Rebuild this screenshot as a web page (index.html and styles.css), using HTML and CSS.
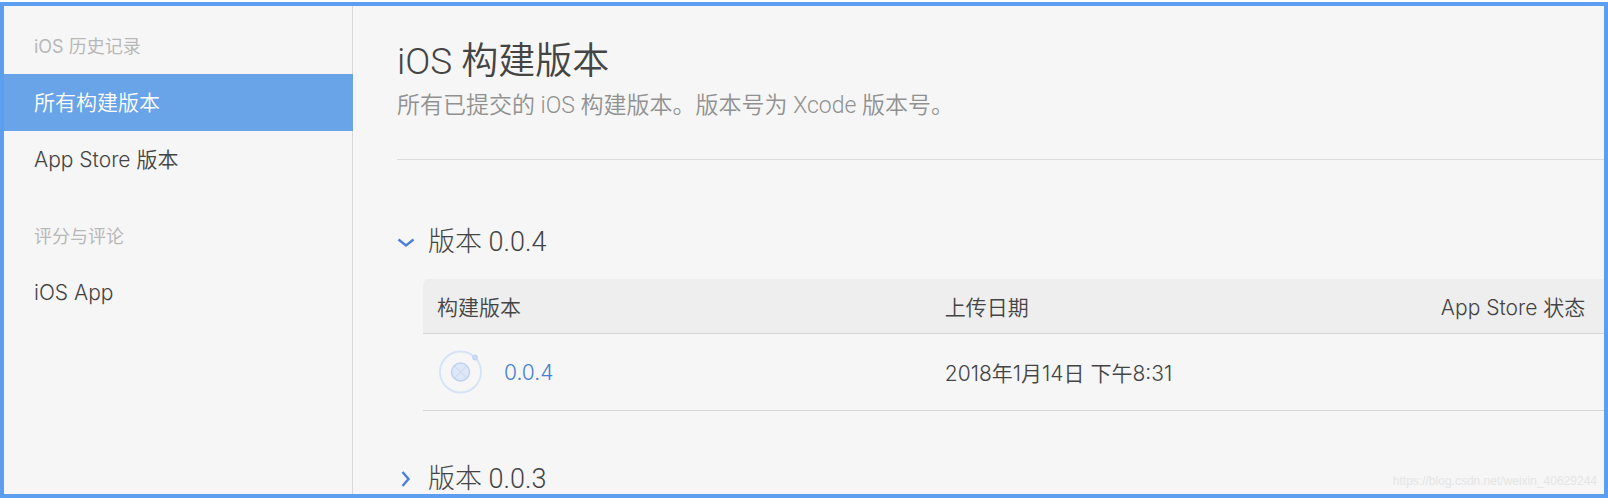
FILE: index.html
```
<!DOCTYPE html>
<html lang="zh-CN">
<head>
  <meta charset="UTF-8">
  <meta name="viewport" content="width=device-width, initial-scale=1.0">
  <title>iOS 构建版本</title>
  <link rel="stylesheet" href="styles.css">
</head>
<body>
  <div class="page">
    <nav class="sidebar">
      <h2 class="nav-title">iOS 历史记录</h2>
      <a class="nav-link active" href="#builds">所有构建版本</a>
      <a class="nav-link" href="#versions">App Store 版本</a>
      <h2 class="nav-title">评分与评论</h2>
      <a class="nav-link" href="#ios-app">iOS App</a>
    </nav>

    <main class="content">
      <header class="content-header">
        <h1>iOS 构建版本</h1>
        <p>所有已提交的 iOS 构建版本。版本号为 Xcode 版本号。</p>
      </header>

      <section class="version">
        <button class="version-toggle" type="button" aria-expanded="true">
          <svg class="chevron" viewBox="0 0 18 18" aria-hidden="true"><path d="M1.5 6.5l7.5 6 7.5-6"/></svg>
          <span>版本 0.0.4</span>
        </button>
        <table class="builds">
          <thead>
            <tr>
              <th class="col-build">构建版本</th>
              <th class="col-date">上传日期</th>
              <th class="col-status">App Store 状态</th>
            </tr>
          </thead>
          <tbody>
            <tr>
              <td>
                <div class="build">
                  <svg class="build-icon" viewBox="0 0 46 46" aria-hidden="true">
                    <circle class="orbit" cx="23.5" cy="23" r="20.5"/>
                    <circle class="planet" cx="23.5" cy="23" r="9"/>
                    <path class="cross" d="M17.5 17l12 12M29.5 17l-12 12"/>
                    <circle class="moon" cx="38" cy="8.5" r="2.5"/>
                  </svg>
                  <a href="#build-004">0.0.4</a>
                </div>
              </td>
              <td>2018年1月14日 下午8:31</td>
              <td></td>
            </tr>
          </tbody>
        </table>
      </section>

      <section class="version">
        <button class="version-toggle" type="button" aria-expanded="false">
          <svg class="chevron" viewBox="0 0 18 18" aria-hidden="true"><path d="M5.500 2l6 7-6 7"/></svg>
          <span>版本 0.0.3</span>
        </button>
      </section>
    </main>

    <span class="watermark">https://blog.csdn.net/weixin_40629244</span>
  </div>
</body>
</html>
```

FILE: styles.css
```
* {
  box-sizing: border-box;
}

body {
  margin: 0;
  padding: 2px 0;
  background-color: #fff;
  color: #444;
  font-family: Inter, "Noto Sans CJK SC", sans-serif;
  font-size: 21px;
  font-weight: 350;
}

h1,
h2,
p {
  margin: 0;
  font-weight: 350;
}

a {
  color: #4a80d0;
  text-decoration: none;
}

.page {
  position: relative;
  display: flex;
  height: calc(100vh - 4px);
  overflow: hidden;
  border: 4px solid #5c9ff0;
  background-color: #f6f6f6;
}

/* Sidebar */
.sidebar {
  flex: 0 0 349px;
  padding-top: 14px;
  border-right: 1px solid #d8d8d8;
}

.nav-title {
  padding-left: 30px;
  color: #b8b8b8;
  font-size: 18px;
  font-weight: 400;
  line-height: 54px;
}

.nav-link {
  display: block;
  padding-left: 30px;
  color: #444;
  line-height: 57px;
}

.nav-link + .nav-title {
  margin-top: 22px;
}

.nav-link.active {
  margin-right: -1px;
  background-color: #69a3e8;
  color: #fff;
}

/* Main column */
.content {
  flex: 1;
  min-width: 0;
  padding: 30px 0 0 44px;
}

.content-header {
  padding-bottom: 35px;
  border-bottom: 1px solid #dcdcdc;
  font-family: Roboto, "Noto Sans CJK SC", sans-serif;
}

.content-header h1 {
  font-size: 37px;
  line-height: 52px;
}

.content-header p {
  color: #919191;
  font-size: 23px;
  line-height: 36px;
}

.version {
  padding-top: 62px;
}

.version + .version {
  padding-top: 48px;
}

.version-toggle {
  display: flex;
  align-items: center;
  gap: 13px;
  padding: 0;
  border: none;
  background: none;
  color: #444;
  font-family: Roboto, "Noto Sans CJK SC", sans-serif;
  font-size: 27px;
  font-weight: 300;
  line-height: 40px;
  cursor: pointer;
}

.chevron {
  width: 18px;
  height: 18px;
  fill: none;
  stroke: #4a80dc;
  stroke-width: 2.4;
}

/* Builds table */
.builds {
  width: calc(100% - 26px);
  margin: 17px 0 0 26px;
  border-spacing: 0;
  table-layout: fixed;
}

.builds th,
.builds td {
  padding: 0 14px;
  border-bottom: 1px solid #d6d6d6;
  font-weight: 350;
  text-align: left;
  white-space: nowrap;
}

.builds th {
  height: 55px;
  background-color: #eee;
}

.builds td {
  height: 77px;
}

.builds th:first-child {
  border-top-left-radius: 6px;
}

.col-build {
  width: 43%;
}

.col-date {
  width: 42%;
}

.build {
  display: flex;
  align-items: center;
  gap: 21px;
}

.build-icon {
  width: 46px;
  height: 46px;
}

.orbit {
  fill: none;
  stroke: #d6e2f5;
  stroke-width: 1.8;
}

.planet {
  fill: #dde7f7;
  stroke: #bed1ef;
  stroke-width: 1.4;
}

.cross {
  fill: none;
  stroke: #c6d6f0;
}

.moon {
  fill: #cbdbf4;
  stroke: #bed1ef;
}

.watermark {
  position: absolute;
  right: 7px;
  bottom: 6px;
  color: #e5e5e5;
  font-family: "Liberation Sans", Arial, sans-serif;
  font-size: 12px;
  font-weight: 400;
}
```
